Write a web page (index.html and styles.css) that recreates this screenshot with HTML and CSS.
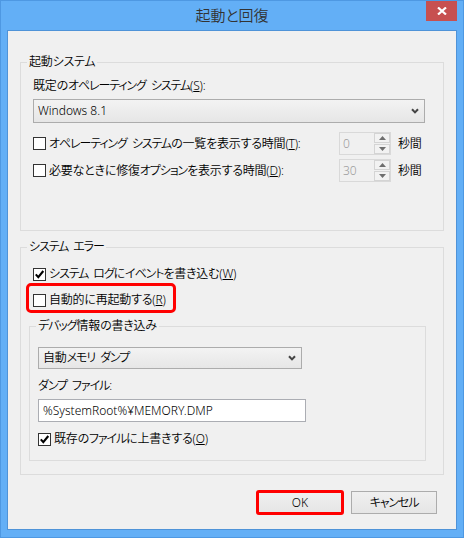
FILE: index.html
```html
<!DOCTYPE html>
<html lang="ja">
<head>
<meta charset="utf-8">
<title>起動と回復</title>
<link rel="stylesheet" href="styles.css">
</head>
<body>
<div class="window">
  <div class="titlebar">
    <div class="title">起動と回復</div>
    <div class="close"><svg width="10" height="8" viewBox="0 0 10 8"><path d="M1 0.5 L9 7.5 M9 0.5 L1 7.5" stroke="#fff" stroke-width="2.2"/></svg></div>
  </div>
  <div class="client">
    <fieldset class="group g1">
      <legend>起動システム</legend>
      <div class="label">既定の<span class="k">オペレーティング システム</span>(<u>S</u>):</div>
      <div class="select select-os"><span class="latin">Windows 8.1</span><svg class="chev" width="8" height="6" viewBox="0 0 8 6"><path d="M1 1.2 L4 4.4 L7 1.2" fill="none" stroke="#444" stroke-width="2"/></svg></div>
      <div class="timer-row first">
        <div class="check"><span class="box"></span><span><span class="k">オペレーティング システム</span>の一覧を表示する時間(<u>T</u>):</span></div>
        <div class="spinner"><span class="val">0</span><span class="spin"><span class="sb"><svg width="7" height="4" viewBox="0 0 7 4"><path d="M0 4 L3.5 0 L7 4Z" fill="#6e6e6e"/></svg></span><span class="sb"><svg width="7" height="4" viewBox="0 0 7 4"><path d="M0 0 L3.5 4 L7 0Z" fill="#6e6e6e"/></svg></span></span></div>
        <span class="unit">秒間</span>
      </div>
      <div class="timer-row">
        <div class="check"><span class="box"></span><span>必要なときに修復<span class="k">オプション</span>を表示する時間(<u>D</u>):</span></div>
        <div class="spinner"><span class="val">30</span><span class="spin"><span class="sb"><svg width="7" height="4" viewBox="0 0 7 4"><path d="M0 4 L3.5 0 L7 4Z" fill="#6e6e6e"/></svg></span><span class="sb"><svg width="7" height="4" viewBox="0 0 7 4"><path d="M0 0 L3.5 4 L7 0Z" fill="#6e6e6e"/></svg></span></span></div>
        <span class="unit">秒間</span>
      </div>
    </fieldset>

    <fieldset class="group g2">
      <legend><span class="k">システム エラー</span></legend>
      <div class="check row"><span class="box"><svg width="11" height="11" viewBox="0 0 11 11"><path d="M1.8 5.4 L4.3 8.2 L9.3 2" fill="none" stroke="#000" stroke-width="2.1"/></svg></span><span><span class="k">システム ログ</span>に<span class="k">イベント</span>を書き込む(<u>W</u>)</span></div>
      <div class="check row hl"><span class="box"></span><span>自動的に再起動する(<u>R</u>)</span></div>

      <fieldset class="group debug">
        <legend><span class="k">デバッグ</span>情報の書き込み</legend>
        <div class="select select-dump"><span>自動<span class="k">メモリ ダンプ</span></span><svg class="chev" width="8" height="6" viewBox="0 0 8 6"><path d="M1 1.2 L4 4.4 L7 1.2" fill="none" stroke="#444" stroke-width="2"/></svg></div>
        <div class="label label-dump"><span class="k">ダンプ ファイル</span>:</div>
        <div class="textbox latin">%SystemRoot%¥MEMORY.DMP</div>
        <div class="check row overwrite"><span class="box"><svg width="11" height="11" viewBox="0 0 11 11"><path d="M1.8 5.4 L4.3 8.2 L9.3 2" fill="none" stroke="#000" stroke-width="2.1"/></svg></span><span>既存の<span class="k">ファイル</span>に上書きする(<u>O</u>)</span></div>
      </fieldset>
    </fieldset>

    <div class="buttons">
      <div class="btn hl latin">OK</div>
      <div class="btn"><span class="k">キャンセル</span></div>
    </div>
  </div>
</div>
</body>
</html>
```

FILE: styles.css
```css
* { box-sizing: border-box; }

body {
  margin: 0;
  font-family: "Noto Sans", "Noto Sans CJK JP", sans-serif;
  font-size: 12px;
  line-height: 16px;
  font-weight: 350;
  color: #000;
  font-feature-settings: "palt";
  letter-spacing: -0.2px;
}

.k {
  letter-spacing: -1.1px;
  word-spacing: 3px;
}

.latin {
  letter-spacing: 0;
}

.window {
  width: 464px;
  height: 538px;
  background: #63aff6;
  box-shadow: inset 0 0 0 1px #4e98e2;
  display: flex;
  flex-direction: column;
}

.titlebar {
  height: 30px;
  display: grid;
  grid-template-columns: 1fr auto 1fr;
}

.title {
  grid-column: 2;
  align-self: center;
  font-size: 15px;
  line-height: 20px;
  color: #333;
  letter-spacing: 0;
  font-family: "Noto Sans CJK JP", sans-serif;
}

.close {
  grid-column: 3;
  justify-self: end;
  align-self: start;
  margin: 1px 7px 0 0;
  width: 31px;
  height: 20px;
  background: #c75050;
  display: flex;
  align-items: center;
  justify-content: center;
}

.client {
  margin: 0 7px;
  height: 500px;
  border: 1px solid #4f93d8;
  background: #f0f0f0;
  padding: 0 12px;
}

.group {
  margin: 0;
  border: 1px solid #dcdcdc;
  min-width: 0;
}

.group legend {
  padding: 0 2px;
  margin-left: -6px;
  line-height: 16px;
}

.g1 {
  margin-top: 23px;
  padding: 8px 18px 48px 12px;
}

.g2 {
  margin-top: 8px;
  padding: 10px 17px 13px 12px;
}

.debug {
  margin: 9px 0 0 -4px;
  padding: 13px 8px 12px 8px;
}

.debug legend {
  margin-left: -2px;
}

.select {
  display: flex;
  align-items: center;
  justify-content: space-between;
  border: 1px solid #acacac;
  background: linear-gradient(#f3f3f3, #e6e6e6);
  padding: 0 5px 0 4px;
}

.select-os {
  margin-top: 5px;
  height: 24px;
}

.select-dump {
  width: 264px;
  height: 22px;
}

.timer-row {
  display: flex;
  align-items: center;
  height: 23px;
  margin-top: 4px;
}

.timer-row.first {
  margin-top: 9px;
}

.check {
  display: flex;
  align-items: center;
  gap: 3px;
  flex: 1;
  white-space: nowrap;
}

.check.row {
  height: 18px;
}

.box {
  width: 13px;
  height: 13px;
  border: 1px solid #333;
  background: #fff;
  flex: none;
  display: flex;
}

.check.hl {
  width: 144px;
  height: 24px;
  margin: 3px 0 -1px -4px;
  padding: 5px 0 1px 4px;
  outline: 3px solid #f00;
  border-radius: 2px;
}

.spinner {
  width: 52px;
  height: 23px;
  border: 1px solid #d9d9d9;
  background: #f0f0f0;
  display: flex;
}

.val {
  flex: 1;
  padding-left: 3px;
  line-height: 21px;
  color: #9d9d9d;
  letter-spacing: 0;
}

.spin {
  width: 16px;
  display: flex;
  flex-direction: column;
  gap: 1px;
}

.sb {
  flex: 1;
  border: 1px solid #d4d4d4;
  background: #f2f2f2;
  display: flex;
  align-items: center;
  justify-content: center;
}

.unit {
  width: 27px;
  margin-left: 7px;
}

.label-dump {
  margin-top: 9px;
}

.textbox {
  margin-top: 5px;
  width: 268px;
  height: 23px;
  border: 1px solid #abadb3;
  background: #fff;
  padding-left: 4px;
  line-height: 21px;
}

.overwrite {
  margin-top: 8px;
}

.buttons {
  display: flex;
  justify-content: flex-end;
  gap: 8px;
  margin: 16px 7px 0 0;
}

.btn {
  width: 86px;
  height: 23px;
  border: 1px solid #acacac;
  background: linear-gradient(#f0f0f0, #e5e5e5);
  display: flex;
  align-items: center;
  justify-content: center;
}

.btn.hl {
  outline: 3px solid #f00;
  outline-offset: -2px;
  border-radius: 2px;
}
```
